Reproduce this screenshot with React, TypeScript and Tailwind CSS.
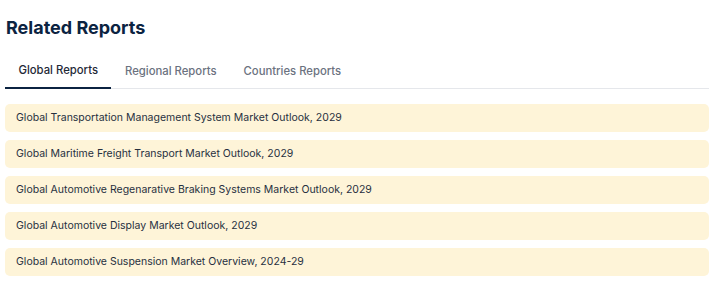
import React from "react";

const items = [
  "Global Transportation Management System Market Outlook, 2029",
  "Global Maritime Freight Transport Market Outlook, 2029",
  "Global Automotive Regenarative Braking Systems Market Outlook, 2029",
  "Global Automotive Display Market Outlook, 2029",
  "Global Automotive Suspension Market Overview, 2024-29",
];

export default function App() {
  return (
    <div className="w-[718px] h-[285px] bg-white pl-[5px] pr-[9px] pt-[14px]" style={{ fontFamily: "Inter, 'Noto Sans', sans-serif" }}>
      <h2 className="text-[18px] leading-[28px] font-bold text-[#0b2341] pl-[1px]">Related Reports</h2>
      <div className="mt-[19px] flex border-b border-[#e5e7eb]">
        <button className="px-[13.5px] pb-[8px] text-[11.3px] leading-[18px] font-medium text-[#1f2937] border-b-2 border-[#0b2341] -mb-px">Global Reports</button>
        <button className="px-[13.5px] pb-[8px] text-[11.3px] leading-[18px] font-medium text-[#6b7280]">Regional Reports</button>
        <button className="px-[13.5px] pb-[8px] text-[11.3px] leading-[18px] font-medium text-[#6b7280]">Countries Reports</button>
      </div>
      <div className="mt-[15px] flex flex-col gap-[8px]">
        {items.map((t) => (
          <div key={t} className="h-[28px] rounded-[5px] bg-[#fef4d8] flex items-center px-[11px] text-[10.5px] text-[#27303f]">
            {t}
          </div>
        ))}
      </div>
    </div>
  );
}
